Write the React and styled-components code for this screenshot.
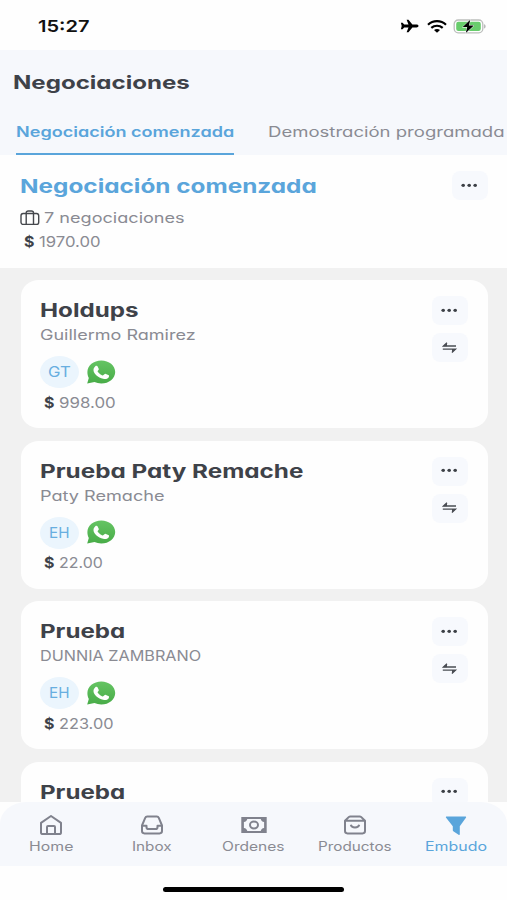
import React, { useLayoutEffect, useRef, useState } from 'react';
import styled, { createGlobalStyle } from 'styled-components';

const deals = [
    { id: 1, title: 'Holdups', titleWidth: 98, contact: 'Guillermo Ramirez', contactWidth: 155, owner: 'GT', amount: '998.00', amountWidth: 57 },
    { id: 2, title: 'Prueba Paty Remache', titleWidth: 263, contact: 'Paty Remache', contactWidth: 124, owner: 'EH', amount: '22.00', amountWidth: 44 },
    { id: 3, title: 'Prueba', titleWidth: 85, contact: 'DUNNIA ZAMBRANO', contactWidth: 161, owner: 'EH', amount: '223.00', amountWidth: 54 },
    { id: 4, title: 'Prueba', titleWidth: 85 },
];

// Wide lettering: the text is stretched to the given width
function Wide({ width, children }) {
    const ref = useRef(null);
    const [scale, setScale] = useState(1);

    useLayoutEffect(() => {
        setScale(width / ref.current.offsetWidth);
    }, [width, children]);

    return (
        <WideBox $width={width}>
            <WideText ref={ref} style={{ transform: `scaleX(${scale})` }}>{children}</WideText>
        </WideBox>
    );
}

function MoreButton() {
    return (
        <SquareButton aria-label="Más">
            <svg width="18" height="6" viewBox="0 0 18 6" fill="#3c4046">
                <ellipse cx="2.2" cy="2.3" rx="1.8" ry="1.6" />
                <ellipse cx="8.2" cy="2.3" rx="1.8" ry="1.6" />
                <ellipse cx="14.2" cy="2.3" rx="1.8" ry="1.6" />
            </svg>
        </SquareButton>
    );
}

function SwapButton() {
    return (
        <SquareButton aria-label="Mover">
            <svg width="16" height="12" viewBox="0 0 16 12" fill="none" stroke="#4a4d53" strokeWidth="1.3">
                <path d="M14 4H1.4L5 .7M.8 7.2h12.7L9.9 10.5" />
                <path d="M1 4.2L5 .7v3.5zM14 7L10 10.6V7z" fill="#4a4d53" stroke="none" />
            </svg>
        </SquareButton>
    );
}

function WhatsApp() {
    return (
        <svg width="29" height="25" viewBox="0 0 29 25">
            <defs>
                <linearGradient id="wa" x1="0" y1="0" x2="0" y2="1">
                    <stop offset="0" stopColor="#65c463" />
                    <stop offset="1" stopColor="#48ac48" />
                </linearGradient>
            </defs>
            <path d="M14.3.4C22 .4 28.2 5.5 28.2 11.9S22 23.5 14.3 23.5c-2.500 0-4.800-.5-6.800-1.400L.2 23.600l1.600-5.700C.8 16 .4 14.100.4 11.900.4 5.500 6.600.4 14.300.4z" fill="url(#wa)" />
            <path d="M8.300 6.200c.6-.6 1.900-.6 2.200.1l1.300 2.700c.3.7-1.200 1.700-1.200 2.200 0 .8 3.200 3.800 5.200 4.200.9.1 1.900-1.800 2.600-1.600l3.400 1.400c.6.3.2 1.800-.4 2.500-1.100 1.300-3.400 1.600-5.300 1-5-1.200-9.300-4.800-9.600-8.500-.1-1.500.6-2.900 1.800-4z" fill="#fff" />
        </svg>
    );
}

function DealCard({ deal }) {
    return (
        <Card>
            <CardInfo>
                <CardTitle><Wide width={deal.titleWidth}>{deal.title}</Wide></CardTitle>
                {deal.contact && (
                    <>
                        <Contact><Wide width={deal.contactWidth}>{deal.contact}</Wide></Contact>
                        <People>
                            <Avatar><Wide width={deal.owner === 'GT' ? 23 : 21}>{deal.owner}</Wide></Avatar>
                            <WhatsApp />
                        </People>
                        <Amount>
                            <Currency><Wide width={11}>$</Wide></Currency>
                            <Wide width={deal.amountWidth}>{deal.amount}</Wide>
                        </Amount>
                    </>
                )}
            </CardInfo>
            <CardActions>
                <MoreButton />
                {deal.contact && <SwapButton />}
            </CardActions>
        </Card>
    );
}

export default function App() {
    return (
        <Screen>
            <GlobalStyle />
            <StatusBar>
                <Clock><Wide width={51}>15:27</Wide></Clock>
                <StatusIcons>
                    <svg width="19" height="14" viewBox="0 0 19 14">
                        <path d="M18.500 7c0 .8-.9 1.400-2 1.400h-4.100L8.500 13.300H6.600l1.900-4.900H4.200L2.600 10.300H.9L1.700 7 .9 3.700h1.700l1.600 1.900h4.300L6.600.7h1.900l3.900 4.900h4.100c1.100 0 2 .6 2 1.400z" />
                    </svg>
                    <svg width="20" height="13" viewBox="0 0 20 13" fill="none" stroke="#000" strokeWidth="2.2">
                        <path d="M1 4.700C6-.1 14-.1 19 4.700" />
                        <path d="M4.300 7.900c3.300-2.900 8.100-2.900 11.400 0" />
                        <path d="M7 10.100c1.700-1.500 4.300-1.500 6 0l-3 2.600z" fill="#000" stroke="none" />
                    </svg>
                    <BatteryIcon width="33" height="15" viewBox="0 0 33 15">
                        <rect x=".2" y="1" width="28.6" height="12.8" rx="4" fill="#fff" stroke="#bcbebc" strokeWidth="1.3" />
                        <rect x="2.2" y="2.8" width="24.6" height="9.2" rx="2.2" fill="#68cd6c" />
                        <path d="M30.2 5.300c1.800.5 1.800 3.700 0 4.200z" fill="#aaa" />
                        <path d="M16.300.8L8.700 8.100h4.500L11.800 14.100l8-7.500h-4.900z" fill="#000" stroke="#fff" strokeWidth="1" paintOrder="stroke" />
                    </BatteryIcon>
                </StatusIcons>
            </StatusBar>

            <Header>
                <PageTitle><Wide width={177}>Negociaciones</Wide></PageTitle>
                <Tabs>
                    <Tab $active><Wide width={218}>Negociación comenzada</Wide></Tab>
                    <Tab><Wide width={237}>Demostración programada</Wide></Tab>
                </Tabs>
            </Header>

            <Stage>
                <div>
                    <StageTitle><Wide width={297}>Negociación comenzada</Wide></StageTitle>
                    <StageLine>
                        <svg width="20" height="16" viewBox="0 0 20 16" fill="none" stroke="#45484d" strokeWidth="1.4">
                            <rect x="1" y="3.5" width="17.7" height="10.9" rx="2.2" />
                            <path d="M6.200 14.500V3c0-1.300.7-2 2-2h3.300c1.300 0 2 .7 2 2v11.500" />
                        </svg>
                        <Wide width={141}>7 negociaciones</Wide>
                    </StageLine>
                    <Amount>
                        <Currency><Wide width={11}>$</Wide></Currency>
                        <Wide width={61}>1970.00</Wide>
                    </Amount>
                </div>
                <MoreButton />
            </Stage>

            <Board>
                {deals.map(deal => <DealCard key={deal.id} deal={deal} />)}
            </Board>

            <NavArea>
                <NavBar>
                    <NavItem>
                        <svg width="24" height="21" viewBox="0 0 24 21" fill="none" stroke="#80828d" strokeWidth="2" strokeLinejoin="round">
                            <path d="M2 7.900L12 1l10 6.900v9.500c0 1.100-.7 1.700-1.900 1.700H3.900c-1.200 0-1.900-.6-1.900-1.700z" />
                            <path d="M8 19v-7c0-.7.3-1 1-1h6c.7 0 1 .3 1 1v7" />
                        </svg>
                        <Wide width={44}>Home</Wide>
                    </NavItem>
                    <NavItem>
                        <svg width="24" height="21" viewBox="0 0 24 21" fill="none" stroke="#80828d" strokeWidth="2" strokeLinejoin="round">
                            <path d="M2 10.500L5.200 2.900c.4-1 1-1.400 2-1.400h9.600c1 0 1.600.4 2 1.400L22 10.500v5.600c0 1.500-.9 2.300-2.500 2.300h-15c-1.600 0-2.500-.8-2.500-2.300z" />
                            <path d="M2 10.800h4.500v1.500c0 1.200.6 1.800 1.800 1.800h7.400c1.200 0 1.800-.6 1.800-1.800v-1.500H22" />
                        </svg>
                        <Wide width={40}>Inbox</Wide>
                    </NavItem>
                    <NavItem>
                        <svg width="26" height="21" viewBox="0 0 26 21">
                            <path fillRule="evenodd" d="M.3 1.900h25.400v16.200H.3zM6.300 4.100c-.3 1.600-1.500 2.700-3.400 3v5.800c1.900.3 3.100 1.400 3.400 3h13.400c.3-1.600 1.500-2.700 3.400-3V7.100c-1.900-.3-3.100-1.400-3.400-3z" fill="#80828d" />
                            <ellipse cx="13" cy="10" rx="4" ry="3.4" fill="none" stroke="#80828d" strokeWidth="2" />
                        </svg>
                        <Wide width={63}>Ordenes</Wide>
                    </NavItem>
                    <NavItem>
                        <svg width="24" height="21" viewBox="0 0 24 21" fill="none" stroke="#80828d" strokeWidth="2" strokeLinejoin="round">
                            <path d="M2 5.800l3.700-3.700c.5-.5 1-.7 1.700-.7h9.200c.7 0 1.200.2 1.700.7L22 5.800v10.300c0 1.500-.9 2.300-2.500 2.300h-15c-1.600 0-2.500-.8-2.500-2.300zM2 5.800h20" />
                            <path d="M7.800 9.800c.8 3.500 7.600 3.500 8.400 0" />
                        </svg>
                        <Wide width={74}>Productos</Wide>
                    </NavItem>
                    <NavItem $active>
                        <svg width="22" height="21" viewBox="0 0 22 21" fill="#5aa5db">
                            <path d="M1.800 1.400h18.400c.9 0 1.200.7.7 1.400L14.800 11.200v8c0 .8-.6 1-1.200.6L8.300 16.200c-.4-.3-.5-.5-.5-1v-4L1.100 2.800c-.5-.7-.2-1.400.7-1.400z" />
                        </svg>
                        <Wide width={62}>Embudo</Wide>
                    </NavItem>
                </NavBar>
                <HomeIndicator />
            </NavArea>
        </Screen>
    );
}

const GlobalStyle = createGlobalStyle`
    * {
        box-sizing: border-box;
    }

    body {
        margin: 0;
        background: #fff;
        font-family: Inter, "Liberation Sans", sans-serif;
        font-feature-settings: "cv11";
    }
`;

const Screen = styled.div`
    display: flex;
    flex-direction: column;
    width: 507px;
    height: 900px;
    overflow: hidden;
    background: #fefefe;
    color: #8a8b93;
`;

const WideBox = styled.span`
    display: block;
    flex: none;
    width: ${props => props.$width}px;
    text-align: left;
`;

const WideText = styled.span`
    display: inline-block;
    vertical-align: top;
    white-space: nowrap;
    transform-origin: left center;
`;

const StatusBar = styled.div`
    display: flex;
    flex: none;
    align-items: center;
    justify-content: space-between;
    height: 50px;
    padding: 2px 19px 0 38px;
`;

const Clock = styled.div`
    color: #111;
    font-size: 16.5px;
    font-weight: 600;
    line-height: 24px;
`;

const StatusIcons = styled.div`
    display: flex;
    align-items: center;
    gap: 8px;
`;

const BatteryIcon = styled.svg`
    margin-left: -1px;
    margin-right: 1px;
    overflow: visible;
`;

const Header = styled.header`
    flex: none;
    height: 105px;
    padding-top: 19px;
    background: #f6f8fc;
`;

const PageTitle = styled.h1`
    margin: 0 0 0 13px;
    color: #3e4249;
    font-size: 18.5px;
    font-weight: 700;
    line-height: 26px;
`;

const Tabs = styled.div`
    display: flex;
    gap: 34px;
    margin: 12px 0 0 16px;
    overflow: hidden;
`;

const Tab = styled.div`
    flex: none;
    height: 48px;
    padding-top: 13px;
    border-bottom: 2px solid ${props => (props.$active ? '#5aa5db' : 'transparent')};
    color: ${props => (props.$active ? '#5aa5db' : '#8a8b93')};
    font-size: 14px;
    font-weight: ${props => (props.$active ? 600 : 400)};
    line-height: 24px;
`;

const Stage = styled.section`
    display: flex;
    flex: none;
    justify-content: space-between;
    height: 113px;
    padding: 16px 19px 0 20px;
`;

const StageTitle = styled.h2`
    margin: 1px 0 0;
    color: #5aa5db;
    font-size: 19px;
    font-weight: 750;
    line-height: 30px;
`;

const StageLine = styled.div`
    display: flex;
    align-items: center;
    gap: 4px;
    height: 24px;
    margin-top: 4px;
    font-size: 14.5px;
    line-height: 24px;
`;

const Amount = styled.div`
    display: flex;
    gap: 4px;
    padding-left: 4px;
    font-size: 14.5px;
    line-height: 24px;
`;

const Currency = styled.span`
    color: #3e4249;
    font-weight: 700;
`;

const SquareButton = styled.button`
    display: flex;
    align-items: center;
    justify-content: center;
    width: 36px;
    height: 29px;
    padding: 0;
    border: 0;
    border-radius: 8px;
    background: #f7f9fd;
`;

const Board = styled.main`
    display: flex;
    flex: 1;
    flex-direction: column;
    gap: 12.6px;
    min-height: 0;
    padding: 12px 19.5px 0 20.5px;
    overflow: hidden;
    background: #f1f1f1;
`;

const Card = styled.article`
    display: flex;
    flex: none;
    justify-content: space-between;
    height: 148px;
    padding: 16px 19.5px 0;
    border-radius: 18px / 16px;
    background: #fefefe;
`;

const CardInfo = styled.div`
    display: flex;
    flex-direction: column;
    padding-top: 1px;
`;

const CardTitle = styled.h3`
    margin: 0;
    color: #3e4249;
    font-size: 19px;
    font-weight: 750;
    line-height: 28px;
`;

const Contact = styled.div`
    font-size: 14.3px;
    line-height: 19px;
`;

const People = styled.div`
    display: flex;
    align-items: center;
    gap: 8px;
    height: 32px;
    margin: 12px 0 2.5px;
`;

const Avatar = styled.div`
    display: flex;
    align-items: center;
    justify-content: center;
    width: 39px;
    height: 32px;
    border-radius: 50%;
    background: #ebf5fd;
    color: #68aee0;
    font-size: 14.5px;
    line-height: 24px;
`;

const CardActions = styled.div`
    display: flex;
    flex-direction: column;
    gap: 8px;
`;

const NavArea = styled.footer`
    flex: none;
    height: 98px;
    background: #fefefe;
`;

const NavBar = styled.nav`
    display: flex;
    height: 64px;
    padding: 13px 0 0;
    border-radius: 26px 26px 0 0 / 22px 22px 0 0;
    background: #f6f8fc;
`;

const NavItem = styled.div`
    display: flex;
    flex: 1;
    flex-direction: column;
    align-items: center;
    color: ${props => (props.$active ? '#5aa5db' : '#8a8b93')};
    font-size: 12.6px;
    line-height: 21px;
`;

const HomeIndicator = styled.div`
    width: 181px;
    height: 5px;
    margin: 21px auto 0;
    border-radius: 3px;
    background: #000;
`;
